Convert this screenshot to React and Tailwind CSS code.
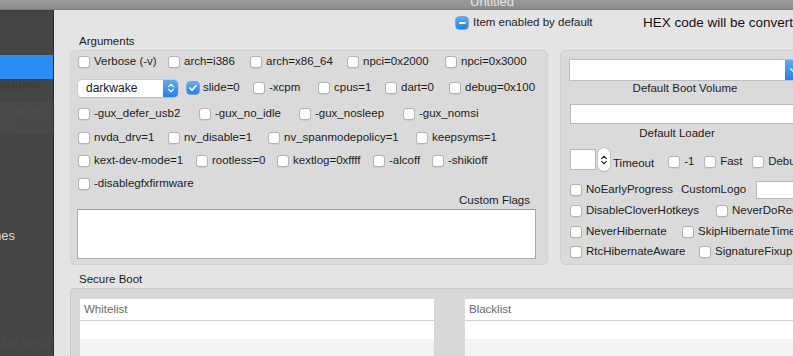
import React from "react";

function Box({ checked, minus }) {
  if (checked || minus) {
    return (
      <span className="w-[12px] h-[12px] rounded-[3px] bg-linear-to-b from-[#5eaaf8] to-[#1f80f0] shadow-[0_0_0_0.5px_#1b6fd4] flex items-center justify-center shrink-0">
        {checked ? (
          <svg width="10" height="10" viewBox="0 0 10 10">
            <path d="M2 5.2 L4.1 7.3 L8 2.6" fill="none" stroke="white" strokeWidth="1.7" strokeLinecap="round" strokeLinejoin="round" />
          </svg>
        ) : (
          <span className="w-[7px] h-[2px] bg-white rounded-[1px]" />
        )}
      </span>
    );
  }
  return (
    <span className="w-[12px] h-[12px] rounded-[3px] bg-white border border-[#b3b3b3] shadow-[0_0.5px_0.5px_rgba(0,0,0,0.12)] shrink-0" />
  );
}

function Item({ label, className = "", checked }) {
  return (
    <div className={"flex items-center gap-[4px] shrink-0 whitespace-nowrap " + className}>
      <Box checked={checked} />
      <span>{label}</span>
    </div>
  );
}

function Chevrons({ color = "white" }) {
  return (
    <svg width="8" height="12" viewBox="0 0 8 12">
      <path d="M1.6 4.6 L4 2.2 L6.4 4.6" fill="none" stroke={color} strokeWidth="1.3" strokeLinecap="round" strokeLinejoin="round" />
      <path d="M1.6 7.4 L4 9.8 L6.4 7.4" fill="none" stroke={color} strokeWidth="1.3" strokeLinecap="round" strokeLinejoin="round" />
    </svg>
  );
}

export default function App() {
  return (
    <div className="w-[793px] h-[356px] overflow-hidden flex flex-col font-['Liberation_Sans',Arial,sans-serif] text-[11.5px] text-[#1c1c1c]">
      {/* title bar */}
      <div className="h-[10px] shrink-0 bg-linear-to-b from-[#9b9b9b] to-[#8b8b8b] border-b border-[#7c7c7c] overflow-hidden pl-[470px]">
        <div className="mt-[-5px] text-[13px] leading-[13px] text-[#e4e4e4]">Untitled</div>
      </div>
      <div className="flex flex-1 min-h-0">
        {/* sidebar */}
        <div className="w-[54px] shrink-0 bg-[#454545] border-r border-[#2b2b2b] flex flex-col overflow-hidden">
          <div className="h-[45px] shrink-0" />
          <div className="h-[24px] shrink-0 bg-[#2a8df5]" />
          <div className="h-[12px] shrink-0 text-[12px] leading-[12px] text-[#3e3e3e] whitespace-nowrap ml-[-10px] font-bold">Features</div>
          <div className="h-[11px] shrink-0" />
          <div className="h-[32px] shrink-0 bg-[#494949] text-[12px] leading-[14px] text-[#4e4e4e] whitespace-nowrap pl-[2px] pt-[2px]">Graphics<br />Inj</div>
          <div className="h-[95px] shrink-0" />
          <div className="h-[14px] shrink-0 text-[13px] leading-[14px] text-[#dadada] whitespace-nowrap ml-[-32px]">Themes</div>
          <div className="h-[92px] shrink-0" />
          <div className="h-[14px] shrink-0 text-[13px] leading-[14px] text-[#4b4b4b] font-bold whitespace-nowrap pl-[2px]">by serch82x</div>
        </div>

        {/* main */}
        <div className="flex-1 min-w-0 overflow-hidden bg-[#e4e4e4] pl-[16px] flex flex-col">
          {/* top row */}
          <div className="h-[25px] shrink-0 flex items-center pt-[1px] whitespace-nowrap">
            <div className="ml-[386px] w-[187px] flex items-center gap-[5px] shrink-0">
              <Box minus />
              <span>Item enabled by default</span>
            </div>
            <span className="text-[13.5px] text-[#111]">HEX code will be converted</span>
          </div>
          <div className="h-[14px] shrink-0 flex items-center pl-[9px]">Arguments</div>

          <div className="mt-[1px] flex gap-[12px] shrink-0 h-[215px]">
            {/* Arguments box */}
            <div className="w-[478px] shrink-0 rounded-[5px] border border-[#d0d0d0] bg-[#dadada] pl-[6px] pr-[11px] pt-[2px] flex flex-col">
              <div className="flex items-center h-[18px] ml-[1px]">
                <Item label="Verbose (-v)" className="w-[90px]" />
                <Item label="arch=i386" className="w-[82px]" />
                <Item label="arch=x86_64" className="w-[97px]" />
                <Item label="npci=0x2000" className="w-[98px]" />
                <Item label="npci=0x3000" />
              </div>
              <div className="flex items-center h-[18px] ml-[1px] mt-[8px]">
                <div className="w-[100px] h-[17px] shrink-0 flex rounded-[4px] bg-white shadow-[0_0_0_0.5px_#b9b9b9,0_1px_1px_rgba(0,0,0,0.12)] mr-[9px]">
                  <span className="flex-1 pl-[8px] text-[12px] leading-[17px] text-[#1a1a1a]">darkwake</span>
                  <span className="w-[15px] rounded-r-[4px] bg-linear-to-b from-[#5eaaf8] to-[#1f80f0] flex items-center justify-center">
                    <Chevrons />
                  </span>
                </div>
                <Item label="slide=0" className="w-[66px]" checked />
                <Item label="-xcpm" className="w-[65px]" />
                <Item label="cpus=1" className="w-[67px]" />
                <Item label="dart=0" className="w-[64px]" />
                <Item label="debug=0x100" />
              </div>
              <div className="flex items-center h-[18px] ml-[1px] mt-[8px]">
                <Item label="-gux_defer_usb2" className="w-[121px]" />
                <Item label="-gux_no_idle" className="w-[100px]" />
                <Item label="-gux_nosleep" className="w-[104px]" />
                <Item label="-gux_nomsi" />
              </div>
              <div className="flex items-center h-[18px] ml-[1px] mt-[6px]">
                <Item label="nvda_drv=1" className="w-[90px]" />
                <Item label="nv_disable=1" className="w-[100px]" />
                <Item label="nv_spanmodepolicy=1" className="w-[148px]" />
                <Item label="keepsyms=1" />
              </div>
              <div className="flex items-center h-[18px] ml-[1px] mt-[5px]">
                <Item label="kext-dev-mode=1" className="w-[118px]" />
                <Item label="rootless=0" className="w-[81px]" />
                <Item label="kextlog=0xffff" className="w-[96px]" />
                <Item label="-alcoff" className="w-[59px]" />
                <Item label="-shikioff" />
              </div>
              <div className="flex items-center h-[18px] ml-[1px] mt-[5px]">
                <Item label="-disablegfxfirmware" />
              </div>
              <div className="h-[14px] mt-[1px] flex items-center justify-end pr-[6px]">Custom Flags</div>
              <div className="h-[50px] mt-[1px] bg-white border border-[#ababab] border-t-[#9a9a9a]" />
            </div>

            {/* right box */}
            <div className="w-[250px] shrink-0 rounded-[5px] border border-[#d0d0d0] bg-[#dadada] pl-[9px] pt-[9px] flex flex-col overflow-hidden">
              <div className="w-[230px] h-[20px] flex bg-white shadow-[0_0_0_1px_#bdbdbd] shrink-0">
                <span className="flex-1" />
                <span className="w-[15px] bg-linear-to-b from-[#5eaaf8] to-[#1f80f0] flex items-center justify-center">
                  <svg width="8" height="8" viewBox="0 0 8 8">
                    <path d="M1.5 2.8 L4 5.3 L6.5 2.8" fill="none" stroke="white" strokeWidth="1.3" strokeLinecap="round" strokeLinejoin="round" />
                  </svg>
                </span>
              </div>
              <div className="w-[230px] h-[14px] mt-[2px] flex items-center justify-center">Default Boot Volume</div>
              <div className="w-[230px] h-[20px] mt-[8px] bg-white border border-[#b7b7b7] shrink-0" />
              <div className="w-[214px] h-[14px] mt-[3px] flex items-center justify-center">Default Loader</div>
              <div className="h-[23px] mt-[7px] flex items-start whitespace-nowrap">
                <div className="w-[26px] h-[21px] mt-[1px] bg-white border border-[#b7b7b7] shrink-0" />
                <div className="w-[12px] h-[23px] ml-[2px] rounded-[6px] bg-white shadow-[0_0_0_0.5px_#b0b0b0,0_1px_1px_rgba(0,0,0,0.12)] flex items-center justify-center shrink-0">
                  <Chevrons color="#333" />
                </div>
                <span className="ml-[3px] mt-[9px] leading-[13px]">Timeout</span>
                <div className="flex items-center h-[14px] mt-[7px] ml-[14px]">
                  <Item label="-1" className="w-[36px]" />
                  <Item label="Fast" className="w-[48px]" />
                  <Item label="Debug" />
                </div>
              </div>
              <div className="flex items-center h-[18px] mt-[10px] whitespace-nowrap">
                <Item label="NoEarlyProgress" className="w-[111px]" />
                <span className="w-[75px] shrink-0">CustomLogo</span>
                <div className="w-[60px] h-[18px] bg-white border border-[#b7b7b7] shrink-0" />
              </div>
              <div className="flex items-center h-[18px] mt-[3px]">
                <Item label="DisableCloverHotkeys" className="w-[146px]" />
                <Item label="NeverDoRecentHibernate" />
              </div>
              <div className="flex items-center h-[18px] mt-[3px]">
                <Item label="NeverHibernate" className="w-[112px]" />
                <Item label="SkipHibernateTimeout" />
              </div>
              <div className="flex items-center h-[18px] mt-[2px]">
                <Item label="RtcHibernateAware" className="w-[129px]" />
                <Item label="SignatureFixup" />
              </div>
            </div>
          </div>

          <div className="h-[14px] mt-[8px] shrink-0 flex items-center pl-[9px]">Secure Boot</div>
          <div className="mt-[1px] w-[760px] flex-1 shrink-0 rounded-t-[5px] border-t border-l border-[#c9c9c9] bg-[#d8d8d8] pl-[9px] pt-[10px] flex gap-[30px]">
            <div className="w-[355px] shrink-0 flex flex-col border-r border-[#d6d6d6]">
              <div className="h-[22px] bg-white border-b border-[#d2d2d2] pl-[4px] flex items-center text-[#6a6a6a]">Whitelist</div>
              <div className="h-[18px] bg-white" />
              <div className="flex-1 bg-[#f3f3f3]" />
            </div>
            <div className="w-[340px] shrink-0 flex flex-col">
              <div className="h-[22px] bg-white border-b border-[#d2d2d2] pl-[4px] flex items-center text-[#6a6a6a]">Blacklist</div>
              <div className="h-[18px] bg-white" />
              <div className="flex-1 bg-[#f3f3f3]" />
            </div>
          </div>
        </div>
      </div>
    </div>
  );
}
